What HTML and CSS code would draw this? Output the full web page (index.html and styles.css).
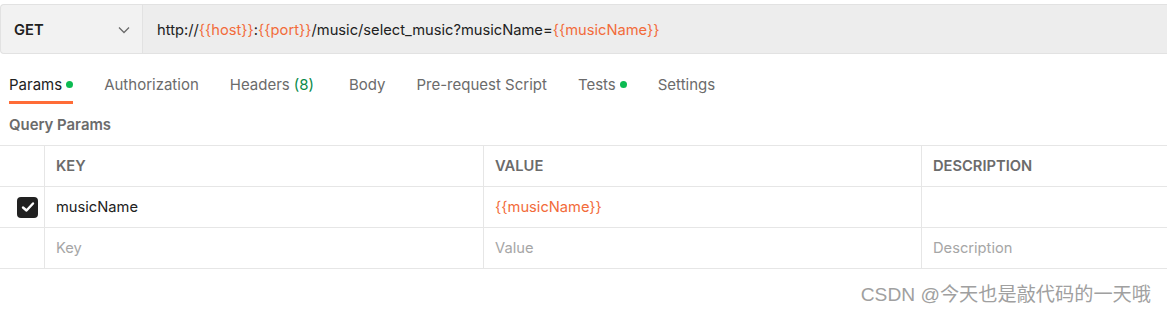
FILE: index.html
```html
<!DOCTYPE html>
<html lang="en">
  <head>
    <meta charset="UTF-8" />
    <title>Params</title>
    <link rel="stylesheet" href="styles.css">
  </head>
  <body>
    <div class="request-bar">
      <div class="method-select">
        <span class="method">GET</span>
        <svg class="chevron" width="12" height="8" viewBox="0 0 12 8">
          <path d="M1 1.5 L6 6.5 L11 1.5" fill="none" stroke="#6b6b6b" stroke-width="1.3" />
        </svg>
      </div>
      <div class="url-input">
        <span>http://<span class="var">{{host}}</span>:<span class="var">{{port}}</span>/music/select_music?musicName=<span class="var">{{musicName}}</span></span>
      </div>
    </div>

    <div class="tabs">
      <div class="tab active">Params <span class="dot"></span></div>
      <div class="tab">Authorization</div>
      <div class="tab">Headers <span class="count">(8)</span></div>
      <div class="tab">Body</div>
      <div class="tab">Pre-request Script</div>
      <div class="tab">Tests <span class="dot"></span></div>
      <div class="tab">Settings</div>
    </div>

    <div class="section-title">Query Params</div>

    <div class="params-table">
      <div class="row header">
        <div class="cell check"></div>
        <div class="cell key">KEY</div>
        <div class="cell value">VALUE</div>
        <div class="cell desc">DESCRIPTION</div>
      </div>
      <div class="row">
        <div class="cell check">
          <span class="checkbox">
            <svg width="14" height="12" viewBox="0 0 14 12">
              <path d="M2 6.5 L5.5 9.5 L12 2.5" fill="none" stroke="#fff" stroke-width="2.4" stroke-linecap="round" stroke-linejoin="round" />
            </svg>
          </span>
        </div>
        <div class="cell key">musicName</div>
        <div class="cell value var">{{musicName}}</div>
        <div class="cell desc"></div>
      </div>
      <div class="row">
        <div class="cell check"></div>
        <div class="cell key placeholder">Key</div>
        <div class="cell value placeholder">Value</div>
        <div class="cell desc placeholder">Description</div>
      </div>
    </div>

    <div class="watermark">CSDN @今天也是敲代码的一天哦</div>
  </body>
</html>
```

FILE: styles.css
```css
body {
  margin: 0;
  padding-top: 4px;
  font-family: "Inter", "Noto Sans", sans-serif;
  font-size: 14.7px;
  color: #212121;
  background: #fff;
  position: relative;
  height: 312px;
  overflow: hidden;
}
.request-bar {
  display: flex;
  height: 48px;
  border: 1px solid #e2e2e2;
  border-right: none;
  border-radius: 4px 0 0 4px;
  background: #ededed;
}
.method-select {
  width: 142px;
  display: flex;
  align-items: center;
  justify-content: space-between;
  padding: 1px 12px 0 13px;
  box-sizing: border-box;
  background: #f2f2f2;
  border-right: 1px solid #e2e2e2;
  border-radius: 4px 0 0 4px;
}
.method {
  font-weight: 600;
  font-size: 14.7px;
  color: #212121;
}
.url-input {
  display: flex;
  align-items: center;
  padding: 1px 0 0 14px;
  white-space: nowrap;
  color: #212121;
}
.var {
  color: #f26b3a;
}
.tabs {
  display: flex;
  gap: 31px;
  padding: 0 9px;
  margin-top: 21px;
}
.tab {
  font-size: 15px;
  color: #6b6b6b;
  padding-bottom: 7px;
  display: flex;
  align-items: center;
  gap: 4px;
  border-bottom: 3px solid transparent;
}
.tab.active {
  color: #212121;
  border-bottom-color: #ff6c37;
}
.dot {
  width: 7px;
  height: 7px;
  border-radius: 50%;
  background: #0cbb52;
  display: inline-block;
}
.count {
  color: #0a8a4a;
  margin-right: 4px;
}
.section-title {
  padding: 12px 9px 0;
  font-weight: 600;
  font-size: 14.9px;
  color: #6b6b6b;
  height: 29px;
}
.params-table {
  border-top: 1px solid #e6e6e6;
}
.row {
  display: grid;
  grid-template-columns: 44px 439px 438px 1fr;
  height: 40px;
  border-bottom: 1px solid #e6e6e6;
}
.cell {
  display: flex;
  align-items: center;
  padding-left: 11px;
  border-left: 1px solid #e6e6e6;
}
.cell.check {
  border-left: none;
  padding-left: 17px;
}
.row.header .cell {
  font-weight: 600;
  color: #6b6b6b;
  text-transform: uppercase;
  padding-bottom: 1px;
  box-sizing: border-box;
}
.checkbox {
  width: 21px;
  height: 21px;
  border-radius: 4px;
  background: #212121;
  display: flex;
  align-items: center;
  justify-content: center;
}
.placeholder {
  color: #a6a6a6;
}
.watermark {
  position: absolute;
  right: 16px;
  top: 279px;
  font-size: 19.2px;
  color: #a0a0a0;
  font-family: "Liberation Sans", "Noto Sans CJK SC", sans-serif;
  text-shadow: 0 0 1px #fff;
}
```
